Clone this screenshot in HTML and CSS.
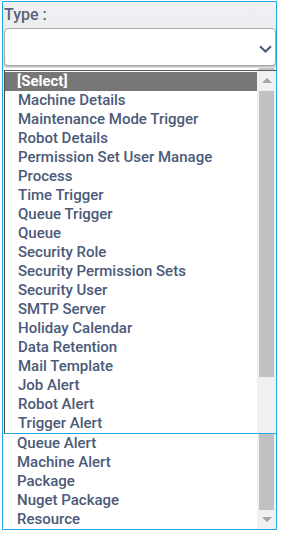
FILE: index.html
```html
<!DOCTYPE html>
<html>
<head>
<meta charset="utf-8">
<link rel="stylesheet" href="styles.css">
</head>
<body>
<div class="frame">
  <div class="top">
    <div class="label">Type :</div>
    <div class="select">
      <svg class="chev" width="13" height="8" viewBox="0 0 13 8"><path d="M1 1.2 L6.5 6.5 L12 1.2" fill="none" stroke="#4b5a79" stroke-width="2"/></svg>
    </div>
  </div>
  <div class="list">
    <div class="rows">
      <div class="row">Queue Alert</div>
      <div class="row">Machine Alert</div>
      <div class="row">Package</div>
      <div class="row">Nuget Package</div>
      <div class="row">Resource</div>
    </div>
    <div class="sb">
      <div class="thumb"></div>
      <div class="btn"><span class="tri down"></span></div>
    </div>
  </div>
  <div class="popup">
    <div class="prow">
      <div class="prow-item sel">[Select]</div>
      <div class="prow-item">Machine Details</div>
      <div class="prow-item">Maintenance Mode Trigger</div>
      <div class="prow-item">Robot Details</div>
      <div class="prow-item">Permission Set User Manage</div>
      <div class="prow-item">Process</div>
      <div class="prow-item">Time Trigger</div>
      <div class="prow-item">Queue Trigger</div>
      <div class="prow-item">Queue</div>
      <div class="prow-item">Security Role</div>
      <div class="prow-item">Security Permission Sets</div>
      <div class="prow-item">Security User</div>
      <div class="prow-item">SMTP Server</div>
      <div class="prow-item">Holiday Calendar</div>
      <div class="prow-item">Data Retention</div>
      <div class="prow-item">Mail Template</div>
      <div class="prow-item">Job Alert</div>
      <div class="prow-item">Robot Alert</div>
      <div class="prow-item">Trigger Alert</div>
    </div>
    <div class="psb">
      <div class="btn"><span class="tri up"></span></div>
      <div class="pthumb"></div>
    </div>
  </div>
</div>
</body>
</html>
```
FILE: styles.css
```css
html, body {
  margin: 0;
  padding: 0;
  background: #ffffff;
}
body {
  font-family: Roboto, "Liberation Sans", sans-serif;
}
.frame {
  position: relative;
  margin: 1px 0 0 2px;
  width: 275px;
  height: 529px;
  box-sizing: border-box;
  border: 1px solid #22a8e2;
  display: flex;
  flex-direction: column;
  background: #ffffff;
}
.top {
  background: linear-gradient(#eff1f3, #e3e5e8);
  padding: 0 0 2px 1px;
}
.label {
  height: 26px;
  box-sizing: border-box;
  padding: 3px 0 0 0;
  font-size: 16px;
  font-weight: 500;
  line-height: 19px;
  color: #5a6579;
}
.select {
  height: 38px;
  box-sizing: border-box;
  border: 1px solid #a8a8a8;
  border-radius: 4px;
  background: #ffffff;
  box-shadow: 0 1px 1px rgba(0, 0, 0, 0.18);
  display: flex;
  align-items: center;
  justify-content: flex-end;
  padding: 4px 3px 0 0;
}
.chev {
  display: block;
}
.list {
  flex: 1;
  display: flex;
  min-height: 0;
}
.rows {
  flex: 1;
  display: flex;
  flex-direction: column;
  justify-content: flex-end;
}
.row, .prow-item {
  height: 19px;
  line-height: 19px;
  font-size: 15px;
  font-weight: 500;
  color: #4b5a79;
  white-space: nowrap;
  overflow: hidden;
}
.row {
  padding-left: 14px;
}
.sb {
  width: 19px;
  background: #f0f0f0;
  display: flex;
  flex-direction: column;
}
.thumb {
  flex: 1;
  margin: 0 2px;
  background: #c1c1c1;
}
.btn {
  height: 19px;
  display: flex;
  align-items: center;
  justify-content: center;
}
.tri {
  width: 0;
  height: 0;
  border-left: 5px solid transparent;
  border-right: 5px solid transparent;
}
.tri.down {
  border-top: 5px solid #a3a3a3;
}
.tri.up {
  border-bottom: 5px solid #a3a3a3;
  margin-top: -2px;
}
.popup {
  position: absolute;
  left: 1px;
  top: 68px;
  width: 273px;
  box-sizing: border-box;
  border-top: 1px solid #5a5a5a;
  border-left: 1px solid #4d4d4d;
  border-right: 1px solid #22a8e2;
  border-bottom: 1px solid #22a8e2;
  background: #ffffff;
  display: flex;
}
.prow {
  flex: 1;
  display: flex;
  flex-direction: column;
  padding-top: 1px;
}
.prow-item {
  padding-left: 13px;
}
.prow-item.sel {
  background: #767676;
  color: #ffffff;
  font-weight: 700;
  padding-left: 12px;
}
.psb {
  width: 19px;
  background: #f0f0f0;
  display: flex;
  flex-direction: column;
  padding-top: 1px;
}
.pthumb {
  height: 286px;
  margin: 0 2px;
  background: #c1c1c1;
}
```
